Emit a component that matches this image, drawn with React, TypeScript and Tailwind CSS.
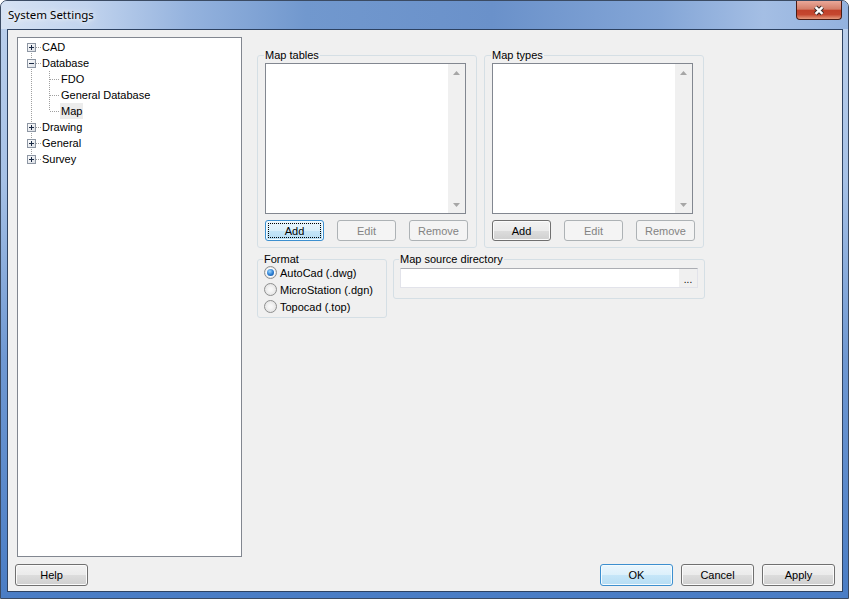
import type { ReactNode } from "react";

type Kind = "normal" | "default" | "focus" | "disabled";

const kinds: Record<Kind, string> = {
  normal:
    "border-[#707070] bg-[linear-gradient(#f2f2f2,#ebebeb_50%,#dddddd_50%,#cfcfcf)] shadow-[inset_0_0_0_1px_#fbfbfb] text-black",
  default:
    "border-[#3c8fcf] bg-[linear-gradient(#eaf6fd,#dcf0fb_50%,#c6e6f8_50%,#b6ddf4)] shadow-[inset_0_0_0_1px_#f4fbfe] text-black",
  focus:
    "border-[#3c8fcf] bg-[linear-gradient(#eaf6fd,#dcf0fb_50%,#c6e6f8_50%,#b6ddf4)] shadow-[inset_0_0_0_1px_#f4fbfe] text-black",
  disabled: "border-[#adb2b5] bg-[#f4f4f4] text-[#838383]",
};

function Button({
  label,
  kind = "normal",
  className = "",
}: {
  label: string;
  kind?: Kind;
  className?: string;
}) {
  return (
    <button
      type="button"
      className={`relative flex items-center justify-center rounded-[3px] border ${kinds[kind]} ${className}`}
    >
      {kind === "focus" && (
        <span className="pointer-events-none absolute inset-[2px] border border-dotted border-black" />
      )}
      {label}
    </button>
  );
}

function Arrow({ up }: { up?: boolean }) {
  return (
    <div className="flex h-[17px] items-center justify-center">
      <svg width="7" height="4" viewBox="0 0 7 4">
        <path d={up ? "M0 4L3.5 0L7 4Z" : "M0 0L3.5 4L7 0Z"} fill="#a6a6a6" />
      </svg>
    </div>
  );
}

function ListBox() {
  return (
    <div className="flex h-[151px] w-[201px] border border-[#828790] bg-white">
      <div className="flex-1" />
      <div className="flex w-[17px] flex-col justify-between bg-[#f0f0f0]">
        <Arrow up />
        <Arrow />
      </div>
    </div>
  );
}

function Group({
  title,
  className = "",
  children,
}: {
  title: string;
  className?: string;
  children: ReactNode;
}) {
  return (
    <fieldset className={`rounded-[3px] border border-[#d5dfe5] ${className}`}>
      <legend className="-ml-px px-px leading-[14px]">{title}</legend>
      {children}
    </fieldset>
  );
}

function ListGroup({ title }: { title: string }) {
  return (
    <Group title={title} className="w-[220px] px-[7px] pb-[6px]">
      <div className="pt-px">
        <ListBox />
      </div>
      <div className="mt-[6px] flex gap-[13px]">
        <Button
          label="Add"
          kind={title === "Map tables" ? "focus" : "normal"}
          className="h-[21px] w-[59px]"
        />
        <Button label="Edit" kind="disabled" className="h-[21px] w-[59px]" />
        <Button label="Remove" kind="disabled" className="h-[21px] w-[59px]" />
      </div>
    </Group>
  );
}

function Radio({ label, checked }: { label: string; checked?: boolean }) {
  return (
    <div className="flex h-[17px] items-center">
      <span className="flex h-[13px] w-[13px] items-center justify-center rounded-full border border-[#8e8f8f] bg-[radial-gradient(circle,#f7f7f7_20%,#dcdcdc)]">
        {checked ? (
          <span className="flex h-[9px] w-[9px] items-center justify-center rounded-full bg-white">
            <span className="h-[7px] w-[7px] rounded-full bg-[radial-gradient(circle_at_40%_35%,#9ad6ff,#2a7bd0_55%,#0d4c92)]" />
          </span>
        ) : null}
      </span>
      <span className="ml-[3px]">{label}</span>
    </div>
  );
}

const treeRows = [
  { label: "CAD", level: 0, exp: "+" },
  { label: "Database", level: 0, exp: "-" },
  { label: "FDO", level: 1 },
  { label: "General Database", level: 1 },
  { label: "Map", level: 1, selected: true },
  { label: "Drawing", level: 0, exp: "+" },
  { label: "General", level: 0, exp: "+" },
  { label: "Survey", level: 0, exp: "+" },
];

function TreeLines() {
  return (
    <svg className="pointer-events-none absolute left-0 top-0" width="60" height="140">
      <defs>
        <linearGradient id="bx" x1="0" y1="0" x2="1" y2="1">
          <stop offset="0" stopColor="#ffffff" />
          <stop offset="1" stopColor="#d9dde3" />
        </linearGradient>
      </defs>
      <g stroke="#a0a0a0" strokeDasharray="1 1" fill="none">
        <line x1="13.5" y1="9" x2="13.5" y2="121" />
        <line x1="31.5" y1="33" x2="31.5" y2="73" />
        {treeRows.map((r, i) => {
          const c = 9 + 16 * i + 0.5;
          return r.level === 0 ? (
            <line key={i} x1="18" y1={c} x2="23" y2={c} />
          ) : (
            <line key={i} x1="32" y1={c} x2="41" y2={c} />
          );
        })}
      </g>
      {treeRows.map((r, i) => {
        if (r.level !== 0) return null;
        const c = 9 + 16 * i;
        return (
          <g key={i}>
            <rect x="9.5" y={c - 3.5} width="8" height="8" fill="url(#bx)" stroke="#8d96a3" />
            <line x1="11" y1={c + 0.5} x2="16" y2={c + 0.5} stroke="#1b2a44" />
            {r.exp === "+" ? (
              <line x1="13.5" y1={c - 2} x2="13.5" y2={c + 3} stroke="#1b2a44" />
            ) : null}
          </g>
        );
      })}
    </svg>
  );
}

function Tree() {
  return (
    <div className="h-[520px] w-[225px] border border-[#828790] bg-white">
      <div className="relative pt-px leading-[16px]">
        <TreeLines />
        {treeRows.map((r) => (
          <div
            key={r.label}
            className={`flex h-[16px] items-center ${r.level === 0 ? "pl-[24px]" : "pl-[43px]"}`}
          >
            <span className={r.selected ? "-ml-px bg-[#ececec] px-px" : ""}>{r.label}</span>
          </div>
        ))}
      </div>
    </div>
  );
}

export default function App() {
  return (
    <div className="flex h-[599px] w-[849px] flex-col overflow-hidden rounded-t-[7px] border border-[#3b4b63] bg-[linear-gradient(180deg,#bcd0ec_0%,#a6c1e6_30%,#6f98d2_60%,#4a7dc5_100%)]">
      <div className="flex h-[28px] shrink-0 items-start justify-between bg-[linear-gradient(90deg,#d6e2f3_0%,#c2d4ee_10%,#95b3de_22%,#7198ce_36%,#6a91ca_58%,#84a6d7_78%,#a4bee4_90%,#93b2de_100%)]">
        <div className="flex h-[28px] items-center pl-[7px] font-['Noto_Sans',sans-serif] text-[11.5px] text-black [text-shadow:0_0_8px_#fff,0_0_4px_#fff]">
          System Settings
        </div>
        <div className="mr-[6px] flex h-[19px] w-[46px] items-center justify-center rounded-b-[4px] border border-t-0 border-[#4a1c14] bg-[linear-gradient(#eaa899,#d47e69_45%,#c1412a_52%,#c5472f_75%,#e59a7d)]">
          <svg width="14" height="11" viewBox="0 0 14 11">
            <path d="M3.5 2.2L10.5 8.8M10.5 2.2L3.5 8.8" stroke="#3a2a28" strokeWidth="4.4" />
            <path d="M3.5 2.2L10.5 8.8M10.5 2.2L3.5 8.8" stroke="#ffffff" strokeWidth="2.4" />
          </svg>
        </div>
      </div>

      <div className="mb-[6px] ml-[6px] mr-[5px] flex flex-1 flex-col border border-[#2d4262] bg-[#f0f0f0] font-['Liberation_Sans',Arial,sans-serif] text-[11px] leading-[14px] text-black">
        <div className="flex gap-[15px] pl-[9px] pt-[7px]">
          <Tree />
          <div className="mt-[11px] flex flex-col">
            <div className="flex gap-[7px]">
              <ListGroup title="Map tables" />
              <ListGroup title="Map types" />
            </div>
            <div className="mt-[4px] flex items-start gap-[6px]">
              <Group title="Format" className="w-[130px] px-[6px] pb-[2px]">
                <div className="-mt-[2px]">
                  <Radio label="AutoCad (.dwg)" checked />
                  <Radio label="MicroStation (.dgn)" />
                  <Radio label="Topocad (.top)" />
                </div>
              </Group>
              <Group title="Map source directory" className="w-[312px] px-[6px] pb-[10px]">
                <div className="mt-[2px] flex h-[20px] border border-[#e2e3ea] border-t-[#abadb3] bg-white">
                  <div className="flex-1" />
                  <div className="flex w-[18px] items-end justify-center bg-[#f0f0f0] pb-[2px] text-[10px] leading-[10px]">
                    ...
                  </div>
                </div>
              </Group>
            </div>
          </div>
        </div>

        <div className="mt-[7px] flex items-center justify-between px-[7px]">
          <Button label="Help" className="h-[22px] w-[73px]" />
          <div className="flex gap-[8px]">
            <Button label="OK" kind="default" className="h-[22px] w-[73px]" />
            <Button label="Cancel" className="h-[22px] w-[73px]" />
            <Button label="Apply" className="h-[22px] w-[73px]" />
          </div>
        </div>
      </div>
    </div>
  );
}
